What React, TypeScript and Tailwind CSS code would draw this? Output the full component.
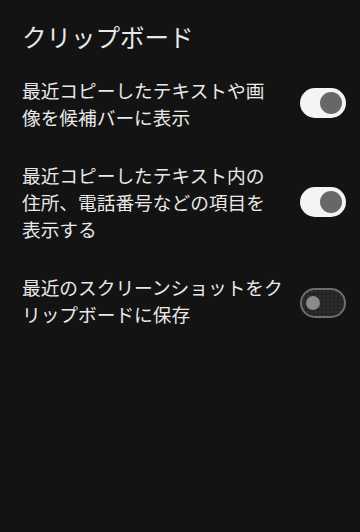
import React, { useState } from "react";

type Row = { id: string; lines: string[]; on: boolean };

const initialRows: Row[] = [
  { id: "suggest", lines: ["最近コピーしたテキストや画", "像を候補バーに表示"], on: true },
  {
    id: "items",
    lines: ["最近コピーしたテキスト内の", "住所、電話番号などの項目を", "表示する"],
    on: true,
  },
  { id: "screenshot", lines: ["最近のスクリーンショットをク", "リップボードに保存"], on: false },
];

function Toggle({ on, onClick }: { on: boolean; onClick: () => void }) {
  return (
    <button
      type="button"
      onClick={onClick}
      className={
        on
          ? "relative w-[46px] h-[30px] rounded-full bg-[#f4f4f4] shrink-0"
          : "relative w-[46px] h-[30px] rounded-full bg-[#242424] bg-[radial-gradient(#313131_1px,transparent_1px)] bg-[length:4px_4px] border-2 border-[#6e6e6e] shrink-0 mt-[5px]"
      }
    >
      {on ? (
        <span className="absolute right-[4px] top-[4px] w-[22px] h-[22px] rounded-full bg-[#676767]" />
      ) : (
        <span className="absolute left-[4px] top-[6px] w-[14px] h-[14px] rounded-full bg-[#8a8a8a]" />
      )}
    </button>
  );
}

export default function App() {
  const [rows, setRows] = useState<Row[]>(initialRows);

  const flip = (id: string) => {
    setRows((prev) => prev.map((r) => (r.id === id ? { ...r, on: !r.on } : r)));
  };

  return (
    <div
      className="w-[360px] h-[532px] bg-[#131313] text-[#e8e8e8] pl-[22px] pr-[14px] pt-[21px]"
      style={{ fontFamily: '"Noto Sans CJK JP", "Noto Sans", sans-serif' }}
    >
      <h1 className="text-[24.5px] leading-[32px] font-normal">クリップボード</h1>
      <div className="mt-[23px] flex flex-col gap-[31px]">
        {rows.map((row) => (
          <div key={row.id} className="flex items-center">
            <div className="flex-1 text-[18.7px] leading-[27px]">
              {row.lines.map((line) => (
                <div key={line} className="whitespace-nowrap">
                  {line}
                </div>
              ))}
            </div>
            <Toggle on={row.on} onClick={() => flip(row.id)} />
          </div>
        ))}
      </div>
    </div>
  );
}
